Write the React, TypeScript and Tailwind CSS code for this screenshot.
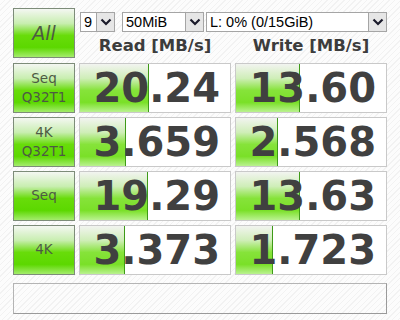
import React from "react";

type Row = {
  label: string[];
  read: string;
  write: string;
  readBar: number;
  writeBar: number;
};

const rows: Row[] = [
  { label: ["Seq", "Q32T1"], read: "20.24", write: "13.60", readBar: 69, writeBar: 64 },
  { label: ["4K", "Q32T1"], read: "3.659", write: "2.568", readBar: 46, writeBar: 42 },
  { label: ["Seq"], read: "19.29", write: "13.63", readBar: 68, writeBar: 64 },
  { label: ["4K"], read: "3.373", write: "1.723", readBar: 45, writeBar: 37 },
];

const font = { fontFamily: '"DejaVu Sans", Verdana, sans-serif' };

function Chevron() {
  return (
    <svg width="12" height="8" viewBox="0 0 12 8">
      <polyline points="1.5,1.5 6,6 10.5,1.5" fill="none" stroke="#1a1a2a" strokeWidth="2.2" />
    </svg>
  );
}

function Select({ value, width }: { value: string; width: string }) {
  return (
    <div className={`flex h-[20px] ${width} items-stretch border border-[#a5a5a5] bg-white`}>
      <span className="flex flex-1 items-center pl-[3px] font-['Liberation_Sans',Arial,sans-serif] text-[14.5px] leading-none text-black">
        {value}
      </span>
      <span className="flex w-[18px] items-center justify-center border-l border-[#a5a5a5] bg-[#e6e6e6]">
        <Chevron />
      </span>
    </div>
  );
}

function GreenButton({ children }: { children: React.ReactNode }) {
  return (
    <div className="flex h-[50px] w-[62px] flex-col items-center justify-center border border-[#7d8c79] bg-[linear-gradient(180deg,#f4f7f2_0%,#c8eeb0_30%,#68dc0a_55%,#5cd800_80%,#a4ec6c_100%)] text-[#4d5a44]">
      {children}
    </div>
  );
}

function Value({ value, bar }: { value: string; bar: number }) {
  return (
    <div className="relative flex h-[50px] w-[152px] items-center justify-end border border-[#c9c9c9] bg-white pr-[10px]">
      <div
        className="absolute top-0 bottom-0 left-0 border-r border-[#3e9a18] bg-[linear-gradient(180deg,#f2f4f0_0%,#cfeeb8_30%,#86e33a_55%,#7ae028_80%,#baf290_100%)]"
        style={{ width: bar }}
      />
      <span className="relative text-[40px] font-bold leading-none text-[#404040]">{value}</span>
    </div>
  );
}

export default function App() {
  return (
    <main
      style={font}
      className="h-[320px] w-[400px] bg-[repeating-linear-gradient(135deg,#fcfcfc_0px,#fcfcfc_3px,#f2f2f2_3px,#f2f2f2_4px)] pl-[13px] pt-[8px]"
    >
      <div className="flex flex-col gap-[4px]">
        <div className="flex gap-[4px]">
          <GreenButton>
            <span className="text-[19px] italic leading-none">All</span>
          </GreenButton>
          <div className="flex w-[308px] flex-col">
            <div className="flex pt-[4px] pl-[1px]">
              <Select value="9" width="w-[35px]" />
              <div className="w-[7px]" />
              <Select value="50MiB" width="w-[82px]" />
              <div className="w-[2px]" />
              <Select value="L: 0% (0/15GiB)" width="w-[181px]" />
            </div>
            <div className="flex flex-1 items-center gap-[4px] pt-[2px]">
              <span className="w-[152px] text-center text-[16.5px] font-bold text-[#3c3c3c]">Read [MB/s]</span>
              <span className="w-[152px] text-center text-[16.5px] font-bold text-[#3c3c3c]">Write [MB/s]</span>
            </div>
          </div>
        </div>
        {rows.map((r) => (
          <div key={r.label.join(" ")} className="flex gap-[4px]">
            <GreenButton>
              {r.label.map((l) => (
                <span key={l} className="text-[13.5px] leading-[19px]">
                  {l}
                </span>
              ))}
            </GreenButton>
            <Value value={r.read} bar={r.readBar} />
            <Value value={r.write} bar={r.writeBar} />
          </div>
        ))}
        <div className="mt-[4px] h-[31px] w-[374px] border border-[#b4b4b4] border-r-[#9a9a9a] border-b-[#9a9a9a]" />
      </div>
    </main>
  );
}
